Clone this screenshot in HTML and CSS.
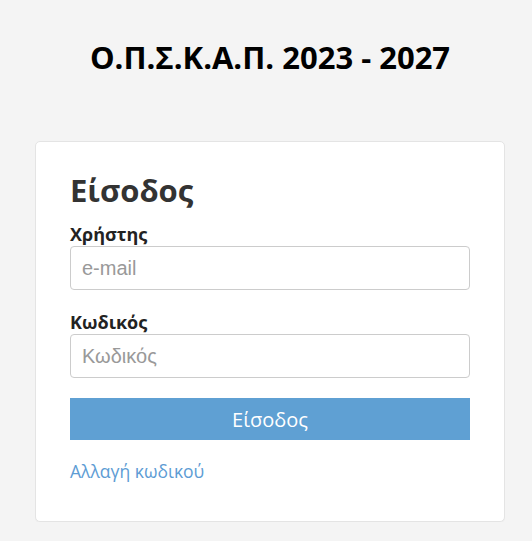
FILE: index.html
```html
<!DOCTYPE html>
<html lang="el">
<head>
 <meta charset="UTF-8">
 <meta name="viewport" content="width=device-width,initial-scale=1.0">
 <title>Ο.Π.Σ.Κ.Α.Π. - Είσοδος</title>
 <link rel="stylesheet" href="styles.css">
</head>
<body>
<h1 class="site_title">Ο.Π.Σ.Κ.Α.Π. 2023 - 2027</h1>
<div class="login_box">
 <h2>Είσοδος</h2>
 <form name="loginForm">
  <label for="user">Χρήστης</label>
  <input type="text" id="user" name="user" placeholder="e-mail">
  <label for="pass">Κωδικός</label>
  <input type="password" id="pass" name="pass" placeholder="Κωδικός">
  <button type="button">Είσοδος</button>
 </form>
 <a class="change_pass" href="#">Αλλαγή κωδικού</a>
</div>
</body>
</html>
```
FILE: styles.css
```css
body{
  margin: 0;
  background: #f4f4f4;
  font-family: "Open Sans", sans-serif;
  color: #333;
}
.site_title{
  margin: 0;
  padding: 37px 0 0 8px;
  height: 141px;
  box-sizing: border-box;
  text-align: center;
  font-size: 31px;
  line-height: 40px;
  color: #000;
}
.login_box{
  margin: 0 27px 0 35px;
  padding: 27px 34px 38px 34px;
  background: #fff;
  border: 1px solid #e4e4e4;
  border-radius: 5px;
  box-shadow: 0 1px 1px rgba(0,0,0,0.03);
}
.login_box h2{
  margin: 0;
  font-size: 31px;
  line-height: 42px;
}
form{
  display: flex;
  flex-direction: column;
}
label{
  font-weight: bold;
  font-size: 18px;
  line-height: 24px;
  margin-top: 11px;
  color: #222;
}
label[for=pass]{
  margin-top: 20px;
}
input{
  height: 44px;
  box-sizing: border-box;
  border: 1px solid #ccc;
  border-radius: 4px;
  padding: 0 11px;
  font-family: "Liberation Sans", Arial, sans-serif;
  font-size: 20px;
  color: #555;
}
input::placeholder{
  color: #999;
}
button{
  margin-top: 20px;
  height: 42px;
  border: none;
  background: #5fa0d3;
  color: #fff;
  font-family: inherit;
  font-size: 20px;
}
.change_pass{
  display: inline-block;
  margin-top: 19px;
  color: #5d9cd4;
  text-decoration: none;
  font-size: 17.5px;
  line-height: 24px;
}
```
